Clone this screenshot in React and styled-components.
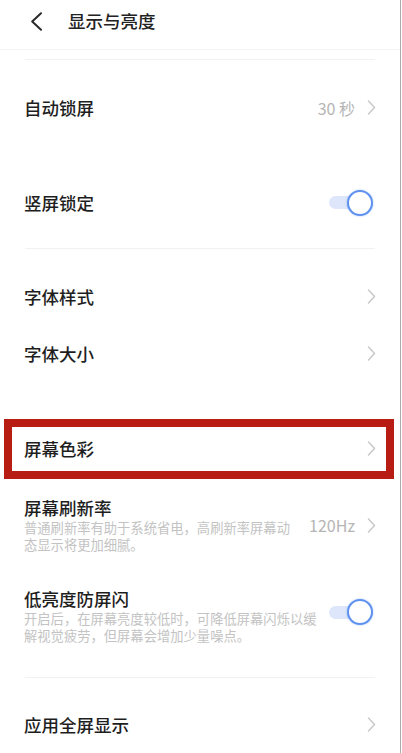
import React from "react";
import styled, { createGlobalStyle } from "styled-components";

const Global = createGlobalStyle`
  html, body { margin: 0; padding: 0; background: #fff; }
  body { font-family: "Noto Sans CJK SC", "Noto Sans", "Liberation Sans", sans-serif; -webkit-font-smoothing: antialiased; }
  * { box-sizing: border-box; }
`;

const Page = styled.div`
  width: 401px;
  min-height: 753px;
  border-right: 1px solid #ababab;
  background: #fff;
  overflow: hidden;
`;

const Header = styled.header`
  height: 50px;
  display: flex;
  align-items: flex-start;
  gap: 25px;
  padding: 9px 0 0 30px;
  border-bottom: 1px solid #f4f4f4;
`;

const BackIcon = styled.svg`
  margin-top: 3px;
  flex: none;
`;

const Title = styled.h1`
  margin: 0;
  font-size: 17.5px;
  line-height: 24px;
  font-weight: 500;
  color: #222;
`;

const Divider = styled.div`
  height: 1px;
  margin: ${(p) => p.$top || 0}px 25px 0 25px;
  background: #f1f1f1;
`;

const Section = styled.section`
  padding: ${(p) => p.$pt}px 0 ${(p) => p.$pb}px;
  display: flex;
  flex-direction: column;
`;

const GroupGap = styled.div`
  height: 38px;
`;

const Row = styled.div`
  position: relative;
  min-height: 57px;
  padding: ${(p) => (p.$pt ? `${p.$pt}px` : 0)} 24px ${(p) => (p.$pb ? `${p.$pb}px` : 0)};
  display: flex;
  align-items: center;
  justify-content: space-between;
  gap: 12px;
`;

const Highlight = styled.div`
  position: absolute;
  top: -1px;
  bottom: -2px;
  left: 4px;
  right: 6px;
  border: 8px solid #b81d13;
  pointer-events: none;
`;

const TextBlock = styled.div`
  display: flex;
  flex-direction: column;
`;

const Label = styled.span`
  font-size: 17.5px;
  line-height: 22px;
  font-weight: 500;
  color: #1e1e1e;
`;

const Sub = styled.span`
  font-size: 13.3px;
  line-height: 17px;
  color: #c3c3c3;
  max-width: ${(p) => p.$w}px;
`;

const Trail = styled.div`
  display: flex;
  align-items: center;
  gap: 12px;
  flex: none;
`;

const Value = styled.span`
  font-size: 16px;
  color: #b5b5b5;
  line-height: 22px;
`;

const Chevron = () => (
  <svg width="9" height="15" viewBox="0 0 9 15">
    <path d="M1.5 1 L7.5 7.5 L1.5 14" fill="none" stroke="#c9c9c9" strokeWidth="1.5" strokeLinecap="round" strokeLinejoin="round" />
  </svg>
);

const Toggle = styled.div`
  position: relative;
  width: 44px;
  height: 26px;
  margin-right: 3px;
  margin-bottom: ${(p) => p.$mb || 0}px;
  flex: none;
`;

const Track = styled.div`
  position: absolute;
  left: 0;
  top: 6.5px;
  width: 32px;
  height: 13px;
  border-radius: 6.5px;
  background: #dde6fa;
`;

const Knob = styled.div`
  position: absolute;
  right: 0;
  top: 0;
  width: 26px;
  height: 26px;
  border-radius: 50%;
  background: #fff;
  border: 2.5px solid #5f92ee;
  box-shadow: 0 0 2px rgba(95, 146, 238, 0.55);
`;

const Switch = ({ mb }) => (
  <Toggle $mb={mb}>
    <Track />
    <Knob />
  </Toggle>
);

export default function App() {
  return (
    <>
      <Global />
      <Page>
        <Header>
          <BackIcon width="13" height="19" viewBox="0 0 13 19">
            <path d="M11 1.2 L2.2 9.5 L11 17.8" fill="none" stroke="#2a2a2a" strokeWidth="2" strokeLinecap="round" strokeLinejoin="round" />
          </BackIcon>
          <Title>显示与亮度</Title>
        </Header>
        <Divider $top={9} />

        <Section $pt={19} $pb={17}>
          <Row>
            <Label>自动锁屏</Label>
            <Trail>
              <Value>30 秒</Value>
              <Chevron />
            </Trail>
          </Row>
          <GroupGap />
          <Row>
            <Label>竖屏锁定</Label>
            <Switch />
          </Row>
        </Section>
        <Divider />

        <Section $pt={19} $pb={17}>
          <Row>
            <Label>字体样式</Label>
            <Chevron />
          </Row>
          <Row>
            <Label>字体大小</Label>
            <Chevron />
          </Row>
          <GroupGap />
          <Row>
            <Label>屏幕色彩</Label>
            <Chevron />
            <Highlight />
          </Row>
          <Row $pt={20} $pb={17}>
            <TextBlock>
              <Label>屏幕刷新率</Label>
              <Sub $w={272}>普通刷新率有助于系统省电，高刷新率屏幕动态显示将更加细腻。</Sub>
            </TextBlock>
            <Trail>
              <Value>120Hz</Value>
              <Chevron />
            </Trail>
          </Row>
          <Row $pt={18} $pb={16}>
            <TextBlock>
              <Label>低亮度防屏闪</Label>
              <Sub $w={298}>开启后，在屏幕亮度较低时，可降低屏幕闪烁以缓解视觉疲劳，但屏幕会增加少量噪点。</Sub>
            </TextBlock>
            <Switch mb={8} />
          </Row>
        </Section>
        <Divider />

        <Section $pt={18} $pb={0}>
          <Row>
            <Label>应用全屏显示</Label>
            <Chevron />
          </Row>
        </Section>
      </Page>
    </>
  );
}
